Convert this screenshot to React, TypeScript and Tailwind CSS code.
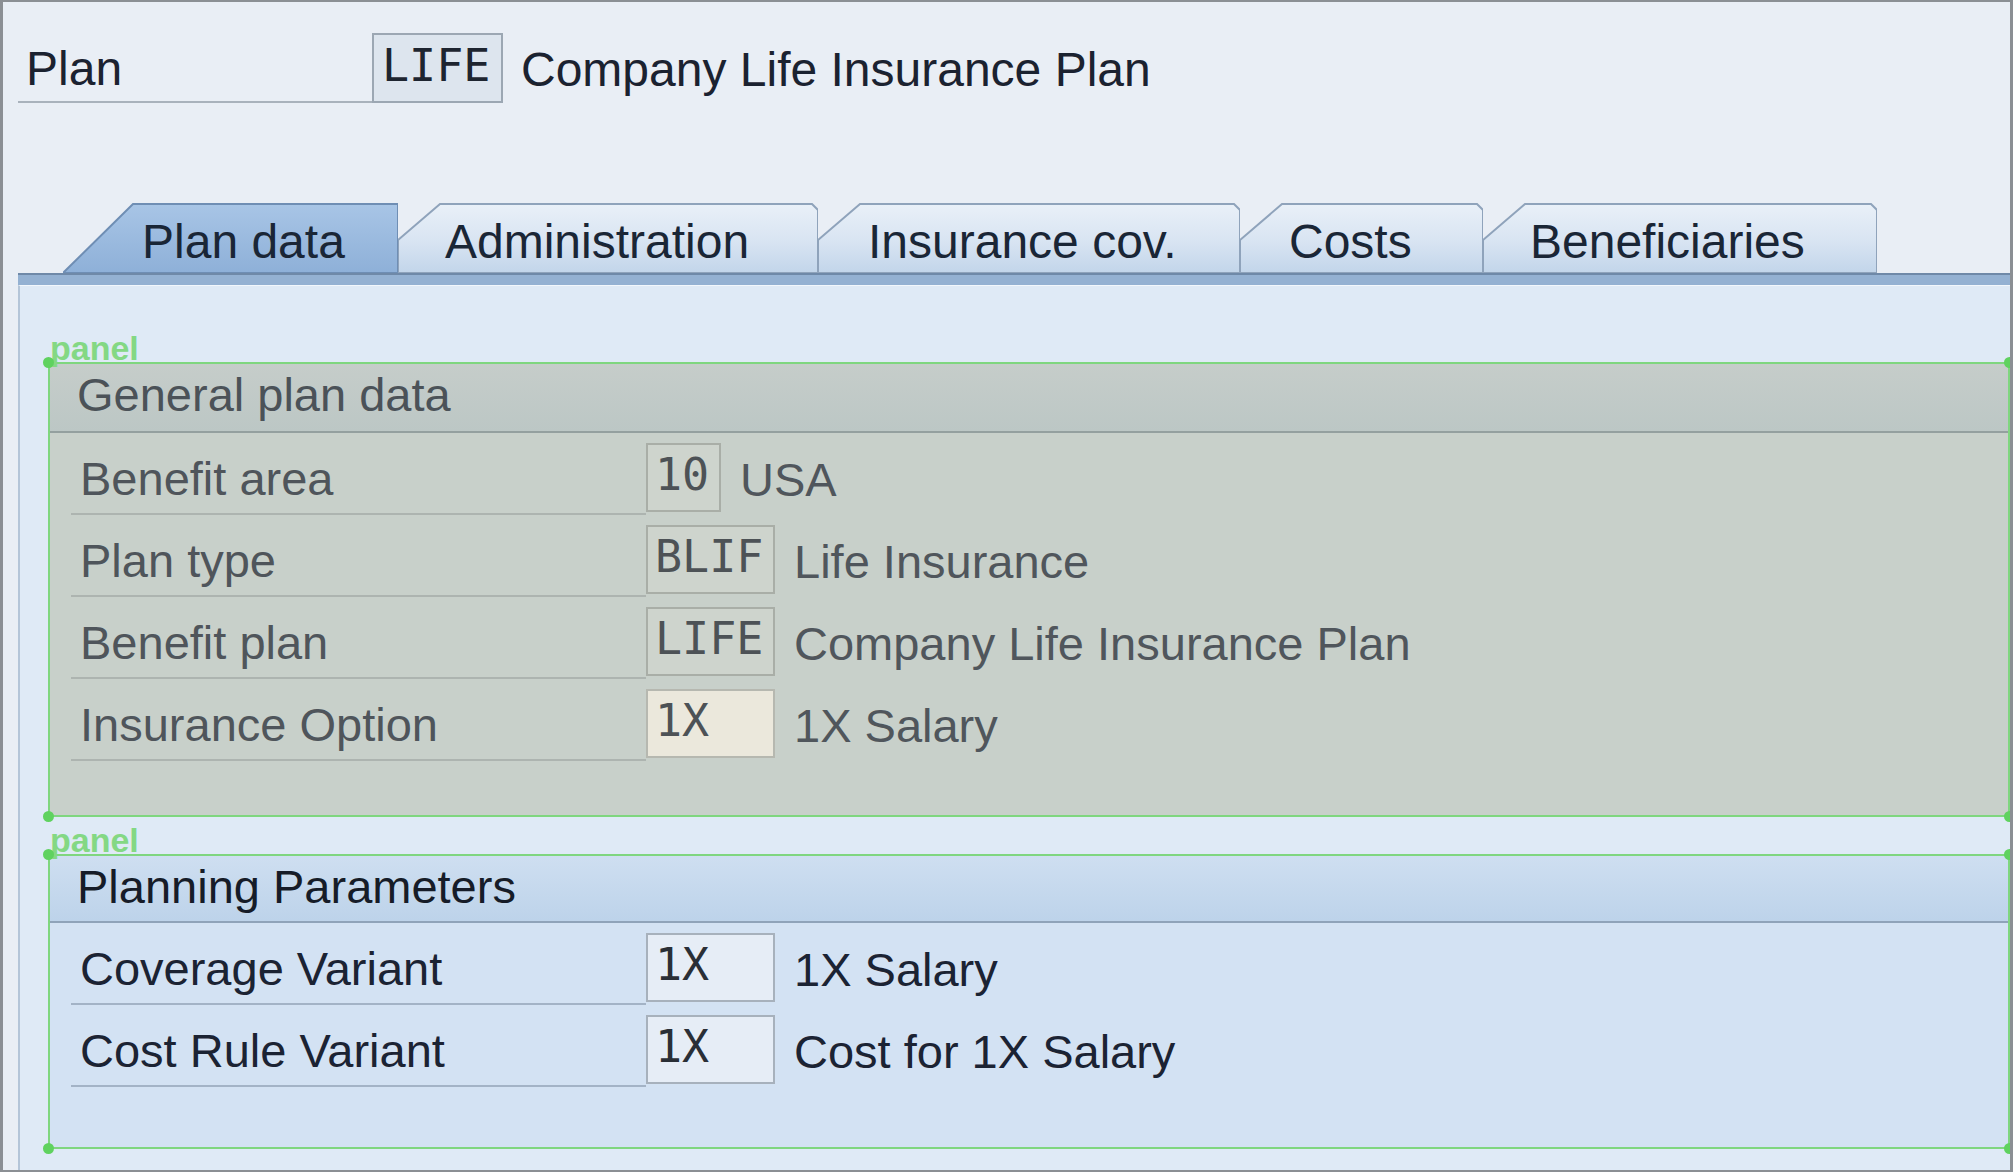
import React from "react";

const sans = "font-['Liberation_Sans',Arial,sans-serif]";
const mono = "font-['DejaVu_Sans_Mono','Liberation_Mono',monospace]";

type Tab = { label: string; w: number; pl: number; active?: boolean };

const tabs: Tab[] = [
  { label: "Plan data", w: 335, pl: 79, active: true },
  { label: "Administration", w: 420, pl: 47 },
  { label: "Insurance cov.", w: 422, pl: 50 },
  { label: "Costs", w: 243, pl: 49 },
  { label: "Beneficiaries", w: 394, pl: 47 },
];

function TabShape({ w, active }: { w: number; active?: boolean }) {
  const pts = active
    ? `0,70 70,1 ${w},1 ${w},70`
    : `0,70 0,37 42,1 ${w - 6},1 ${w},7 ${w},70`;
  const id = active ? "tabOn" : "tabOff";
  return (
    <svg className="absolute inset-0" width={w} height={70} viewBox={`0 0 ${w} 70`}>
      <defs>
        <linearGradient id={id} x1="0" y1="0" x2="0" y2="1">
          {active ? (
            <>
              <stop offset="0" stopColor="#a8c5e6" />
              <stop offset="1" stopColor="#8eb0d8" />
            </>
          ) : (
            <>
              <stop offset="0" stopColor="#e9f0f8" />
              <stop offset="0.55" stopColor="#d8e4f2" />
              <stop offset="1" stopColor="#c2d5ea" />
            </>
          )}
        </linearGradient>
      </defs>
      <polygon points={pts} fill={`url(#${id})`} stroke={active ? "#6f8eb4" : "#8fa3bb"} strokeWidth="2" />
    </svg>
  );
}

type RowData = { label: string; code: string; codeW: number; desc: string; cream?: boolean };

function Row({ r, blue }: { r: RowData; blue?: boolean }) {
  return (
    <div className="flex h-[82px] text-[47px]">
      <div
        className={`ml-[23px] w-[575px] h-full flex items-center pl-[9px] pt-[10px] border-b-2 ${
          blue ? "border-[#a3b3c6] text-[#1b2333]" : "border-[#adb4b0] text-[#4f555b]"
        }`}
      >
        {r.label}
      </div>
      <div
        style={{ width: r.codeW }}
        className={`mt-[10px] h-[69px] flex items-center pl-[7px] pb-[6px] ${mono} text-[45px] border-2 ${
          blue
            ? "bg-[#e6edf6] border-[#a7b1bc] text-[#2a2f36]"
            : r.cream
            ? "bg-[#ebe8dc] border-[#b6b8b0] text-[#4d5256]"
            : "bg-[#ced4cd] border-[#a9aea7] text-[#4d5256]"
        }`}
      >
        {r.code}
      </div>
      <div className={`ml-[19px] flex items-center pt-[10px] ${blue ? "text-[#1b2333]" : "text-[#50565c]"}`}>{r.desc}</div>
    </div>
  );
}

function Annot() {
  return (
    <>
      <div className="pointer-events-none absolute inset-0 border-2 border-[#7fd67f]" />
      <div className={`pointer-events-none absolute left-[2px] -top-[31px] ${sans} text-[34px] font-bold leading-none text-[#84d884]`}>
        panel
      </div>
      <div className="pointer-events-none absolute -left-[5px] -top-[5px] h-[11px] w-[11px] rounded-full bg-[#5fd25f]" />
      <div className="pointer-events-none absolute -left-[5px] -bottom-[5px] h-[11px] w-[11px] rounded-full bg-[#5fd25f]" />
      <div className="pointer-events-none absolute -right-[5px] -top-[5px] h-[11px] w-[11px] rounded-full bg-[#5fd25f]" />
      <div className="pointer-events-none absolute -right-[5px] -bottom-[5px] h-[11px] w-[11px] rounded-full bg-[#5fd25f]" />
    </>
  );
}

const general: RowData[] = [
  { label: "Benefit area", code: "10", codeW: 75, desc: "USA" },
  { label: "Plan type", code: "BLIF", codeW: 129, desc: "Life Insurance" },
  { label: "Benefit plan", code: "LIFE", codeW: 129, desc: "Company Life Insurance Plan" },
  { label: "Insurance Option", code: "1X", codeW: 129, desc: "1X Salary", cream: true },
];

const planning: RowData[] = [
  { label: "Coverage Variant", code: "1X", codeW: 129, desc: "1X Salary" },
  { label: "Cost Rule Variant", code: "1X", codeW: 129, desc: "Cost for 1X Salary" },
];

export default function App() {
  return (
    <div
      className={`w-[2013px] h-[1172px] overflow-hidden flex flex-col bg-[#e9eef5] border-l-[3px] border-r-[3px] border-t-2 border-b-2 border-[#8b8f94] ${sans} text-[48px] leading-none`}
    >
      {/* header field */}
      <div className="mt-[31px] ml-[15px] flex h-[70px]">
        <div className="w-[354px] h-full flex items-center pl-[8px] pt-[4px] border-b-2 border-[#a9b2bc] text-[#1b2230]">Plan</div>
        <div className={`w-[131px] h-full flex items-center pl-[8px] pb-[6px] bg-[#dde5ee] border-2 border-[#9ca7b3] ${mono} text-[45px] text-[#1e2530]`}>
          LIFE
        </div>
        <div className="ml-[18px] flex items-center pt-[4px] text-[#1b2230]">Company Life Insurance Plan</div>
      </div>

      {/* tabs */}
      <div className="mt-[100px] ml-[15px] flex h-[70px] pl-[45px]">
        {tabs.map((t) => (
          <div key={t.label} style={{ width: t.w }} className="relative h-[70px] shrink-0">
            <TabShape w={t.w} active={t.active} />
            <div style={{ paddingLeft: t.pl }} className="relative flex h-full items-center pt-[8px] text-[#1a2636]">
              {t.label}
            </div>
          </div>
        ))}
      </div>
      <div className="ml-[15px] h-[12px] bg-[#94b1d2] border-t-2 border-[#6f89a8]" />

      {/* content */}
      <div className="ml-[15px] flex-1 flex flex-col bg-[#dfeaf6] border-l-2 border-[#b4c5d8] border-t border-t-[#f2f7fc] pl-[28px] pt-[76px]">
        <div className="relative h-[455px] flex flex-col bg-[#c8d0ca]">
          <div className="h-[71px] flex items-center pl-[29px] pb-[4px] bg-gradient-to-b from-[#c6cdca] to-[#bcc7c5] border-b-2 border-[#94a09f] text-[#4b5258] text-[47px]">
            General plan data
          </div>
          {general.map((r) => (
            <Row key={r.label} r={r} />
          ))}
          <Annot />
        </div>

        <div className="relative mt-[37px] h-[295px] flex flex-col bg-[#d3e2f3]">
          <div className="h-[69px] flex items-center pl-[29px] pb-[2px] bg-gradient-to-b from-[#cfdff1] to-[#bdd3ea] border-b-2 border-[#8fa3b9] text-[#161c28] text-[47px]">
            Planning Parameters
          </div>
          {planning.map((r) => (
            <Row key={r.label} r={r} blue />
          ))}
          <Annot />
        </div>
      </div>
    </div>
  );
}
